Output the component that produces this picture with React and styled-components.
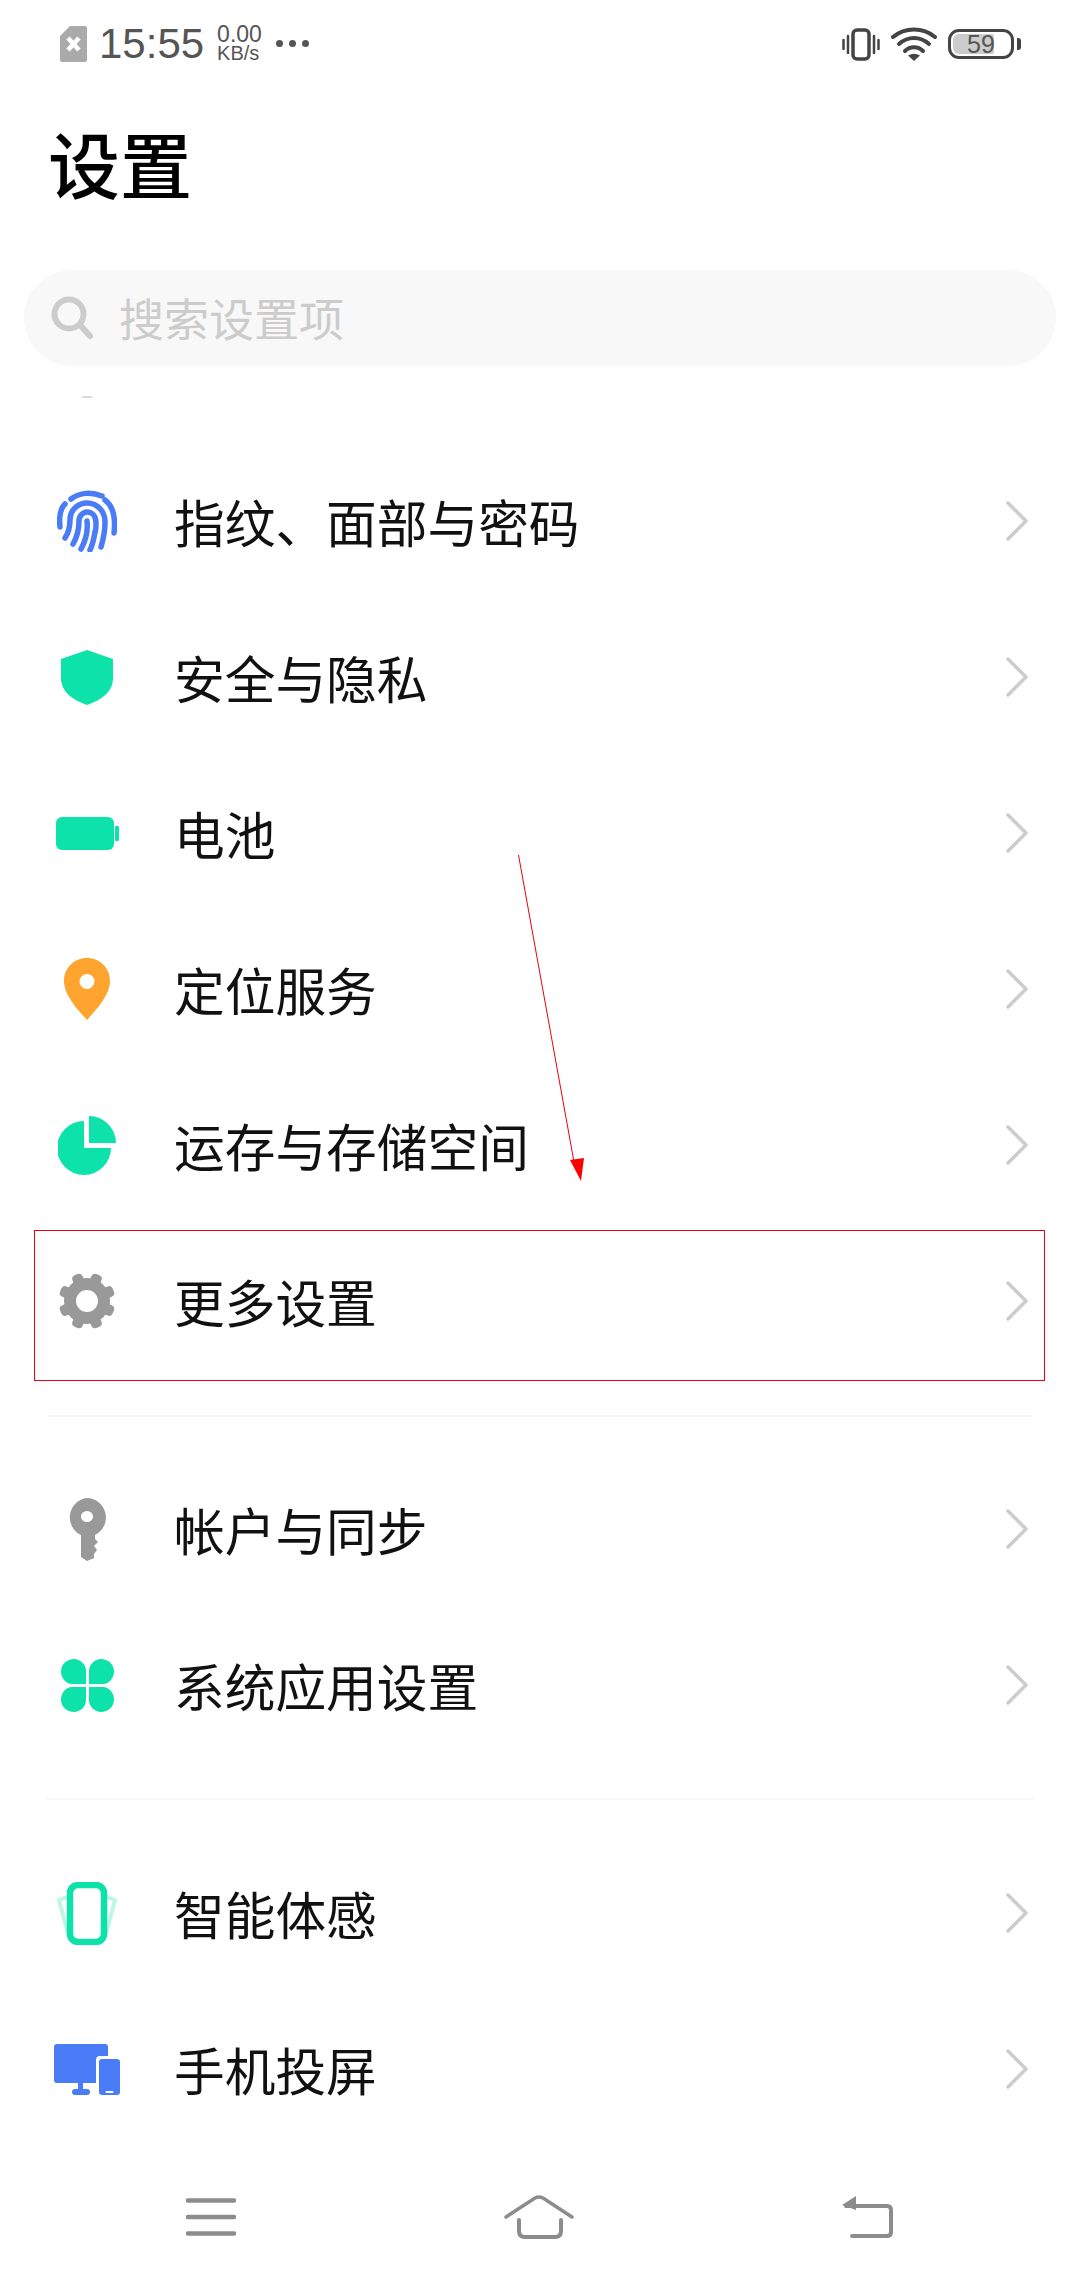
import React from 'react';
import styled, { createGlobalStyle } from 'styled-components';

const GlobalStyle = createGlobalStyle`
  html, body {
    margin: 0;
    padding: 0;
    background: #fff;
  }
  body {
    font-family: "Noto Sans CJK SC", "Noto Sans", sans-serif;
  }
`

const Page = styled.div`
  position: relative;
  display: flex;
  flex-direction: column;
  width: 1080px;
  height: 2280px;
  overflow: hidden;
  background: #fff;
`

const StatusBar = styled.div`
  display: flex;
  align-items: center;
  justify-content: space-between;
  height: 88px;
  padding: 0 59px 0 60px;
  color: #555;
  font-family: "Liberation Sans", Arial, sans-serif;
`

const StatusGroup = styled.div`
  display: flex;
  align-items: center;
  gap: ${(p) => p.$gap || 0}px;
`

const Time = styled.span`
  margin-left: 12px;
  font-size: 42px;
  line-height: 48px;
`

const Speed = styled.div`
  display: flex;
  flex-direction: column;
  margin: 0 0 2px 13px;
  color: #555;
`

const SpeedValue = styled.span`
  font-size: 23px;
  line-height: 21px;
`

const SpeedUnit = styled.span`
  font-size: 20px;
  line-height: 17px;
`

const Dots = styled.div`
  display: flex;
  gap: 6px;
  margin-left: 14px;
  margin-bottom: 2px;
`

const Dot = styled.span`
  width: 7px;
  height: 7px;
  border-radius: 50%;
  background: #555;
`

const BatteryWrap = styled.div`
  display: flex;
  align-items: center;
  gap: 3px;
`

const BatteryShell = styled.div`
  position: relative;
  box-sizing: border-box;
  width: 66px;
  height: 30px;
  padding: 2px;
  border: 3px solid #444;
  border-radius: 11px;
`

const BatteryFill = styled.div`
  width: 74%;
  height: 100%;
  border-radius: 6px 2px 2px 6px;
  background: #ccc;
`

const BatteryLabel = styled.span`
  position: absolute;
  inset: 0;
  display: flex;
  align-items: center;
  justify-content: center;
  color: #555;
  font-size: 25px;
`

const BatteryNub = styled.span`
  width: 4px;
  height: 12px;
  border-radius: 0 3px 3px 0;
  background: #444;
`

const Title = styled.h1`
  margin: 28px 0 0 48px;
  color: #000;
  font-size: 72px;
  font-weight: 500;
  line-height: 92px;
`

const SearchBar = styled.div`
  display: flex;
  align-items: center;
  gap: 26px;
  height: 96px;
  margin: 62px 24px 0;
  padding-left: 27px;
  border-radius: 48px;
  background: #f8f8f8;
`

const SearchHint = styled.span`
  color: #ccc;
  font-size: 45px;
  line-height: 60px;
`

const ScrollPeek = styled.div`
  width: 12px;
  height: 2px;
  margin: 30px 0 45px 81px;
  border-radius: 50%;
  background: #d8d8d8;
`

const Group = styled.div`
  display: flex;
  flex-direction: column;
`

const Row = styled.div`
  position: relative;
  display: flex;
  align-items: center;
  height: 156px;
  padding: 0 52px 0 54px;

  ${(p) => p.$marked && `
    &::after {
      content: '';
      position: absolute;
      top: 7px;
      right: 35px;
      bottom: -2px;
      left: 34px;
      border: 1px solid #e60012;
    }
  `}
`

const IconSlot = styled.div`
  display: flex;
  align-items: center;
  justify-content: center;
  flex: none;
  width: 66px;
  height: 66px;
`

const Label = styled.span`
  flex: 1;
  margin-left: 54px;
  color: #111;
  font-size: 50.7px;
  line-height: 66px;
`

const Divider = styled.div`
  height: 2px;
  margin: ${(p) => p.$top}px 46px ${(p) => p.$bottom}px;
  background: #f8f8f8;
`

const NavBar = styled.div`
  display: flex;
  flex: 1;
  align-items: center;
  justify-content: space-between;
  padding: 7px 186px 0;
`

const Annotation = styled.svg`
  position: absolute;
  top: 850px;
  left: 510px;
`

const BLUE = '#4a7cf7';
const GREEN = '#0de2aa';
const GRAY = '#999';

const FingerprintIcon = () => (
  <svg width="60" height="62" viewBox="0 0 60 62" fill="none" stroke={BLUE} strokeWidth="5.5" strokeLinecap="round">
    <path d="M14 9C23 2 35 2 45 6" />
    <path d="M48 10C56 16 59 26 57 43" />
    <path d="M8 14C3 19 2 28 3 37" />
    <path d="M8 48C12 42 13 36 13 30C13 20 21 13 30 13C41 13 48 22 48 32C48 40 47 47 44 57" />
    <path d="M16 54C20 47 22 38 22 31C22 26 26 22 30 22C35 22 39 26 39 33C39 37 39 40 38 42" />
    <path d="M24 59C29 50 31 40 30 31" />
    <path d="M38 42C37 48 36 54 33 60" />
  </svg>
);

const ShieldIcon = () => (
  <svg width="52" height="55" viewBox="0 0 52 55">
    <path fill={GREEN} d="M26 0L52 9V28C52 42 40 50 26 55C12 50 0 42 0 28V9Z" />
  </svg>
);

const BatteryIcon = () => (
  <svg width="63" height="33" viewBox="0 0 63 33">
    <rect width="58" height="33" rx="6" fill={GREEN} />
    <rect x="59" y="9" width="4" height="15" rx="1" fill={GREEN} />
  </svg>
);

const PinIcon = () => (
  <svg width="46" height="62" viewBox="0 0 46 62">
    <path fillRule="evenodd" fill="#ffa42f" d="M23 0C36 0 46 10 46 23C46 37 32 52 23 62C14 52 0 37 0 23C0 10 10 0 23 0ZM23 16A7.5 7.5 0 1 0 23 31A7.5 7.5 0 1 0 23 16Z" />
  </svg>
);

const PieIcon = () => (
  <svg width="58" height="59" viewBox="0 0 58 59">
    <path fill={GREEN} d="M26 5A27 27 0 1 0 53 32H26Z" />
    <path fill={GREEN} d="M31 0A27 27 0 0 1 58 27H31Z" />
  </svg>
);

const GearIcon = () => (
  <svg width="58" height="58" viewBox="0 0 58 58">
    <circle cx="29" cy="29" r="23" fill={GRAY} />
    {[22.5, 67.5, 112.5, 157.5, 202.5, 247.5, 292.5, 337.5].map((a) => (
      <rect key={a} x="23.5" y="0.5" width="11" height="12" rx="4" fill={GRAY} transform={`rotate(${a} 29 29)`} />
    ))}
    <circle cx="29" cy="29" r="11" fill="#fff" />
  </svg>
);

const KeyIcon = () => (
  <svg width="40" height="63" viewBox="0 0 40 63">
    <path fillRule="evenodd" fill={GRAY} d="M20 0A19.5 19.5 0 0 1 28 37V41L31 44L27 48L30 52L27 56V60L20 63L14 59V37A19.5 19.5 0 0 1 20 0ZM20 13A6 5.5 0 1 0 20 24A6 5.5 0 1 0 20 13Z" />
  </svg>
);

const CloverIcon = () => (
  <svg width="53" height="53" viewBox="0 0 53 53">
    {['', 'translate(53 0) scale(-1 1)', 'translate(0 53) scale(1 -1)', 'translate(53 53) scale(-1 -1)'].map((t) => (
      <path key={t} fill={GREEN} transform={t} d="M25 25H11C5 25 0 19 0 12.5C0 5 6 0 13 0C19 0 25 5 25 12Z" />
    ))}
  </svg>
);

const MotionIcon = () => (
  <svg width="60" height="63" viewBox="0 0 60 63" fill="none">
    <path d="M10 15L2 18L11 52M50 15L58 18L49 52" stroke="#bff5e4" strokeWidth="4" strokeLinejoin="round" />
    <rect x="13" y="3" width="34" height="57" rx="8" stroke={GREEN} strokeWidth="6.5" />
  </svg>
);

const ScreenIcon = () => (
  <svg width="66" height="51" viewBox="0 0 66 51">
    <rect width="54" height="39" rx="3" fill={BLUE} />
    <rect x="24" y="38" width="5" height="8" fill={BLUE} />
    <rect x="18" y="45" width="18" height="6" rx="3" fill={BLUE} />
    <rect x="42" y="12" width="24" height="39" rx="4" fill="#fff" />
    <rect x="45" y="15" width="21" height="36" rx="3" fill={BLUE} />
    <rect x="51.5" y="47" width="8" height="2" rx="1" fill="#fff" />
  </svg>
);

const Chevron = () => (
  <svg width="22" height="40" viewBox="0 0 22 40" fill="none">
    <path d="M2 2L20 20L2 38" stroke="#ccc" strokeWidth="3.5" strokeLinecap="round" strokeLinejoin="round" />
  </svg>
);

const SimIcon = () => (
  <svg width="27" height="36" viewBox="0 0 27 36">
    <path fill="#aaa" d="M10 0H25A2 2 0 0 1 27 2V34A2 2 0 0 1 25 36H2A2 2 0 0 1 0 34V10Z" />
    <path d="M8 12L19 24M19 12L8 24" stroke="#fff" strokeWidth="4.5" />
  </svg>
);

const SearchIcon = () => (
  <svg width="42" height="44" viewBox="0 0 42 44" fill="none" stroke="#ccc">
    <circle cx="18" cy="18" r="14.5" strokeWidth="6" />
    <path d="M30 30L39 40" strokeWidth="6" strokeLinecap="round" />
  </svg>
);

const VibrateIcon = () => (
  <svg width="38" height="33" viewBox="0 0 38 33" fill="none" stroke="#444" strokeLinecap="round">
    <rect x="11" y="2" width="16" height="29" rx="4" strokeWidth="3.5" />
    <path d="M6 8V25M32 8V25" strokeWidth="2.5" />
    <path d="M1.5 12V21M36.5 12V21" strokeWidth="2.5" />
  </svg>
);

const WifiIcon = () => (
  <svg width="46" height="34" viewBox="0 0 46 34" fill="none" stroke="#444" strokeWidth="4" strokeLinecap="round">
    <path d="M2 10C14 0 32 0 44 10" />
    <path d="M8 17C17 9 29 9 38 17" />
    <path d="M14 24C19 19 27 19 32 24" />
    <path d="M17 28.5Q23 25 29 28.5L23 34Z" fill="#444" stroke="none" />
  </svg>
);

const MenuIcon = () => (
  <svg width="50" height="38" viewBox="0 0 50 38" stroke="#8c8c8c" strokeWidth="4.5" strokeLinecap="round">
    <path d="M2 2.5H48M2 19H48M2 35.5H48" />
  </svg>
);

const HomeIcon = () => (
  <svg width="70" height="44" viewBox="0 0 70 44" fill="none" stroke="#8c8c8c" strokeLinecap="round">
    <path d="M2 22L31 3Q35 1 39 3L68 22" strokeWidth="3.5" />
    <path d="M15 25V36Q15 42 21 42H51Q57 42 57 36V25" strokeWidth="4" />
  </svg>
);

const BackIcon = () => (
  <svg width="52" height="42" viewBox="0 0 52 42" fill="none">
    <path d="M0 9L14 0V14Z" fill="#8c8c8c" />
    <path d="M4 10H45Q49 10 49 14V36Q49 40 45 40H10" stroke="#8c8c8c" strokeWidth="4" strokeLinecap="round" />
  </svg>
);

const groups = [
  [
    { label: '指纹、面部与密码', icon: <FingerprintIcon /> },
    { label: '安全与隐私', icon: <ShieldIcon /> },
    { label: '电池', icon: <BatteryIcon /> },
    { label: '定位服务', icon: <PinIcon /> },
    { label: '运存与存储空间', icon: <PieIcon /> },
    { label: '更多设置', icon: <GearIcon />, marked: true },
  ],
  [
    { label: '帐户与同步', icon: <KeyIcon /> },
    { label: '系统应用设置', icon: <CloverIcon /> },
  ],
  [
    { label: '智能体感', icon: <MotionIcon /> },
    { label: '手机投屏', icon: <ScreenIcon /> },
  ],
];

const dividers = [
  { top: 36, bottom: 34 },
  { top: 35, bottom: 35 },
];

const App = () => (
  <Page>
    <GlobalStyle />
    <StatusBar>
      <StatusGroup>
        <SimIcon />
        <Time>15:55</Time>
        <Speed>
          <SpeedValue>0.00</SpeedValue>
          <SpeedUnit>KB/s</SpeedUnit>
        </Speed>
        <Dots>
          <Dot />
          <Dot />
          <Dot />
        </Dots>
      </StatusGroup>
      <StatusGroup $gap={11}>
        <VibrateIcon />
        <WifiIcon />
        <BatteryWrap>
          <BatteryShell>
            <BatteryFill />
            <BatteryLabel>59</BatteryLabel>
          </BatteryShell>
          <BatteryNub />
        </BatteryWrap>
      </StatusGroup>
    </StatusBar>

    <Title>设置</Title>

    <SearchBar>
      <SearchIcon />
      <SearchHint>搜索设置项</SearchHint>
    </SearchBar>
    <ScrollPeek />

    {groups.map((rows, index) => (
      <React.Fragment key={index}>
        <Group>
          {rows.map((row) => (
            <Row key={row.label} $marked={row.marked}>
              <IconSlot>{row.icon}</IconSlot>
              <Label>{row.label}</Label>
              <Chevron />
            </Row>
          ))}
        </Group>
        {dividers[index] && <Divider $top={dividers[index].top} $bottom={dividers[index].bottom} />}
      </React.Fragment>
    ))}

    <NavBar>
      <MenuIcon />
      <HomeIcon />
      <BackIcon />
    </NavBar>

    <Annotation width="80" height="340" viewBox="0 0 80 340">
      <path d="M8.5 5L64 312" stroke="#e60012" strokeWidth="1" />
      <path d="M60 310L74 308L71 331Z" fill="#f00" />
    </Annotation>
  </Page>
);

export default App;
